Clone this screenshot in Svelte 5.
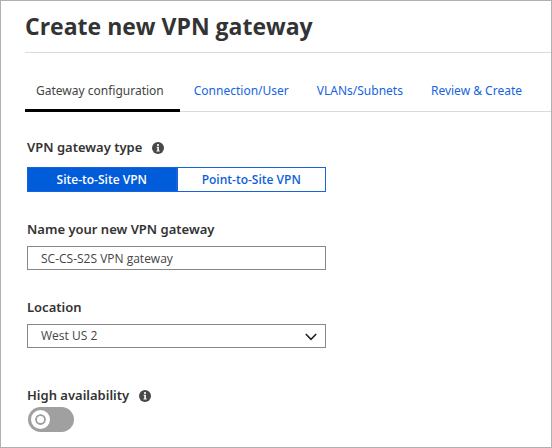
<script>
  const tabs = ['Gateway configuration', 'Connection/User', 'VLANs/Subnets', 'Review & Create'];
  const types = ['Site-to-Site VPN', 'Point-to-Site VPN'];
  let activeTab = $state(tabs[0]);
  let type = $state(types[0]);
  let name = $state('SC-CS-S2S VPN gateway');
  let location = $state('West US 2');
  let highAvailability = $state(false);
</script>

{#snippet info()}
  <svg class="info" viewBox="0 0 12 12" aria-hidden="true">
    <circle cx="6" cy="6" r="6" fill="#484848" />
    <circle cx="6" cy="3" r="1.1" fill="#fff" />
    <path d="M4.6 4.8H6.9V8.6H7.7V9.6H4.5V8.6H5.3V5.8H4.6Z" fill="#fff" />
  </svg>
{/snippet}

<main>
  <h1>Create new VPN gateway</h1>
  <nav>
    {#each tabs as tab}
      <a
        href="#{tab}"
        class:active={activeTab === tab}
        aria-current={activeTab === tab ? 'page' : undefined}
        onclick={(e) => { e.preventDefault(); activeTab = tab; }}>{tab}</a>
    {/each}
  </nav>
  <form>
    <div class="field type">
      <div class="label" id="type-label">VPN gateway type {@render info()}</div>
      <div class="segments" role="group" aria-labelledby="type-label">
        {#each types as t}
          <button type="button" class:selected={type === t} aria-pressed={type === t} onclick={() => (type = t)}>{t}</button>
        {/each}
      </div>
    </div>
    <div class="field">
      <label class="label" for="name">Name your new VPN gateway</label>
      <input id="name" class="control" type="text" bind:value={name} />
    </div>
    <div class="field">
      <label class="label" for="location">Location</label>
      <div class="select">
        <select id="location" class="control" bind:value={location}>
          <option>West US 2</option>
          <option>East US</option>
        </select>
        <svg class="chevron" viewBox="0 0 12 8" aria-hidden="true">
          <path d="M0.8 1L6 6.4L11.2 1" fill="none" stroke="#222" stroke-width="1.6" />
        </svg>
      </div>
    </div>
    <div class="field availability">
      <label class="label" for="ha">High availability {@render info()}</label>
      <span class="toggle">
        <input id="ha" type="checkbox" role="switch" bind:checked={highAvailability} />
        <span class="knob"></span>
      </span>
    </div>
  </form>
</main>

<style>
  :global(body) {
    background: #fff;
  }
  main {
    box-sizing: border-box;
    min-height: 100vh;
    padding: 0 0 12px 24px;
    border: 1px solid #b0b0b0;
    color: #333;
    font-family: 'Segoe UI', 'Noto Sans', 'Open Sans', sans-serif;
    font-size: 12px;
  }
  h1 {
    margin: 0;
    padding: 9px 0 10px;
    border-bottom: 1px solid #dadada;
    font-family: 'Segoe UI', 'Open Sans', 'Noto Sans', sans-serif;
    font-size: 23px;
    line-height: 32px;
    font-weight: 700;
    white-space: nowrap;
  }
  nav {
    display: flex;
    padding-top: 24px;
    border-bottom: 1px solid #dadada;
  }
  nav a {
    margin-bottom: -1px;
    padding: 4px 14px 8px;
    border-bottom: 3px solid transparent;
    color: #1565e0;
    line-height: 20px;
    text-decoration: none;
    white-space: nowrap;
  }
  nav a.active {
    padding-right: 16px;
    padding-left: 11px;
    border-color: #000;
    color: #444;
  }
  form {
    display: flex;
    flex-direction: column;
    gap: 27px;
    max-width: 299px;
    padding: 25px 2px 0;
  }
  .field {
    display: flex;
    flex-direction: column;
    gap: 7px;
  }
  .label {
    display: flex;
    align-items: center;
    gap: 10px;
    font-size: 13px;
    line-height: 20px;
    font-weight: 600;
  }
  .info {
    width: 12px;
    height: 12px;
    padding-top: 2px;
  }
  .type {
    gap: 10px;
  }
  .segments {
    display: flex;
  }
  .segments button {
    flex: 1;
    height: 25px;
    padding: 0;
    border: 1px solid #1663dc;
    border-radius: 0;
    background: #fff;
    color: #0f5fda;
    font: 600 12px/20px 'Segoe UI', 'Open Sans', 'Noto Sans', sans-serif;
  }
  .segments button.selected {
    background: #015cda;
    color: #fff;
  }
  .control {
    box-sizing: border-box;
    width: 100%;
    height: 24px;
    padding: 0 13px;
    border: 1px solid #888;
    border-radius: 0;
    background: #fff;
    color: #444;
    font: 12px/20px 'Segoe UI', 'Open Sans', 'Noto Sans', sans-serif;
    appearance: none;
  }
  .select {
    position: relative;
    display: flex;
  }
  .chevron {
    position: absolute;
    top: 9px;
    right: 9px;
    width: 12px;
    height: 8px;
    pointer-events: none;
  }
  .availability {
    gap: 2px;
    padding-top: 10px;
  }
  .toggle {
    position: relative;
    display: flex;
    width: 46px;
    height: 25px;
    margin-left: 1px;
  }
  .toggle input {
    width: 46px;
    height: 25px;
    margin: 0;
    border-radius: 13px;
    background: #a0a0a0;
    appearance: none;
  }
  .toggle input:checked {
    background: #015cda;
  }
  .knob {
    position: absolute;
    top: 3px;
    left: 3px;
    box-sizing: border-box;
    width: 19px;
    height: 19px;
    border: 4px solid #fff;
    border-radius: 50%;
    background: #fff;
    box-shadow: inset 0 0 0 2px #a0a0a0;
    pointer-events: none;
  }
  .toggle input:checked + .knob {
    left: 24px;
  }
</style>
